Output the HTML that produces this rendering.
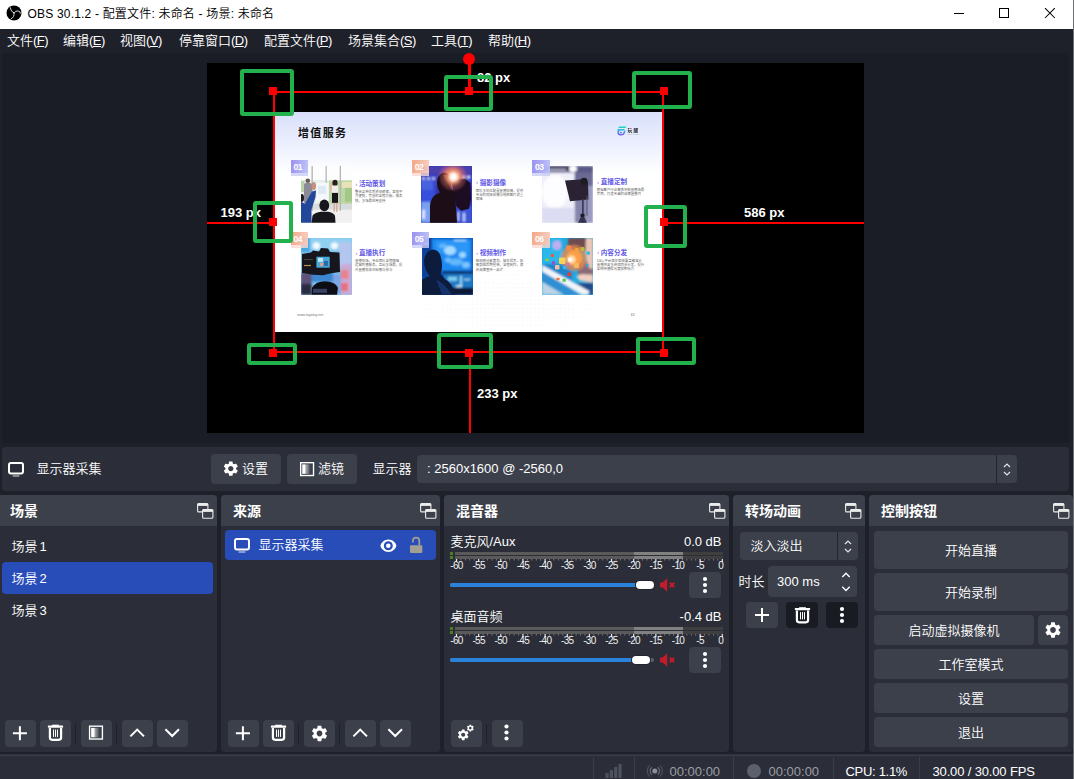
<!DOCTYPE html>
<html lang="zh-CN">
<head>
<meta charset="utf-8">
<title>OBS 30.1.2 - 配置文件: 未命名 - 场景: 未命名</title>
<style>
*{box-sizing:border-box;margin:0;padding:0}
html,body{width:1074px;height:779px;overflow:hidden;background:#1f212a}
body{position:relative;font-family:"Liberation Sans","Noto Sans CJK SC",sans-serif;font-size:13px;color:#fff;line-height:1;font-weight:350}
.abs{position:absolute}
.t{position:absolute;white-space:nowrap;line-height:16px;height:16px}
.mk{letter-spacing:-.55px}
u{text-decoration:underline;text-underline-offset:1px}
/* title bar */
#titlebar{left:0;top:0;width:1073px;height:29px;background:#fff;color:#000}
#edge{left:1073px;top:0;width:1px;height:779px;background:#6d6f75}
#titletext{left:27.500px;top:6px;font-size:12px;color:#000;letter-spacing:.19px}
/* menu */
#menubar{left:0;top:29px;width:1073px;height:24px;background:#1f212a}
#menubar .t{top:4px;font-size:13px}
/* preview */
#pvbg{left:2px;top:53px;width:1067px;height:390px;background:#1a1c26}
#pv{left:207px;top:63px;width:657px;height:370px;background:#000;overflow:hidden}
.red{position:absolute;background:#ff0000}
.gr{position:absolute;border:4px solid #22b14c;border-radius:3px}
.lbl{position:absolute;font-weight:bold;font-size:13px;color:#fff;white-space:nowrap;line-height:14px;text-shadow:1px 1px 1px #000}
/* toolbar */
#tb{left:2px;top:447px;width:1067px;height:44px;background:#2b2e38;border-radius:4px}
.btn{position:absolute;background:#3c404b;border-radius:4px}
/* docks */
.dock{position:absolute;top:495px;height:257px;background:#2b2e38;border-radius:4px}
.dock .hd{position:absolute;left:0;top:0;right:0;height:31px;background:#3c404b;border-radius:4px 4px 0 0}
.dock .hd .t{left:12px;top:7px;font-size:14px;font-weight:bold;line-height:18px;height:18px}
.sel{position:absolute;background:#284cb8;border-radius:4px}
.tk{position:absolute;font-size:10px;line-height:10px;height:10px;letter-spacing:-.7px;white-space:nowrap;color:#f0f0f0}
/* status */
#sbline{left:0;top:754px;width:1073px;height:1px;background:#2f323d}
.sep{position:absolute;top:757px;width:1px;height:22px;background:#2b2e38}
</style>
</head>
<body>
<!-- TITLE BAR -->
<div id="titlebar" class="abs">
  <svg class="abs" style="left:6px;top:5px" width="16" height="16" viewBox="0 0 16 16">
    <circle cx="8" cy="7.900" r="7.500" fill="#000"/>
    <path d="M8 8Q4.600 6.800 4.200 2.700M8 8Q9.600 5.400 12.200 6T14.400 8.200M8 8Q8.600 12 5.200 13.800" stroke="#fff" stroke-width=".9" fill="none" stroke-linecap="round" opacity=".92"/>
  </svg>
  <div id="titletext" class="t">OBS 30.1.2 - 配置文件: 未命名 - 场景: 未命名</div>
  <svg class="abs" style="left:950px;top:0" width="123" height="29" viewBox="0 0 123 29">
    <path d="M4 13.500h10" stroke="#000" stroke-width="1" fill="none"/>
    <rect x="49.500" y="8.500" width="9" height="9" stroke="#000" stroke-width="1" fill="none"/>
    <path d="M95 8.200l9.800 9.800M104.800 8.200l-9.800 9.800" stroke="#000" stroke-width="1.050" fill="none"/>
  </svg>
</div>
<div id="edge" class="abs"></div>

<!-- MENU BAR -->
<div id="menubar" class="abs">
  <div class="t" style="left:7px">文件<span class="mk">(<u>F</u>)</span></div>
  <div class="t" style="left:63px">编辑<span class="mk">(<u>E</u>)</span></div>
  <div class="t" style="left:120px">视图<span class="mk">(<u>V</u>)</span></div>
  <div class="t" style="left:179px">停靠窗口<span class="mk">(<u>D</u>)</span></div>
  <div class="t" style="left:264px">配置文件<span class="mk">(<u>P</u>)</span></div>
  <div class="t" style="left:348px">场景集合<span class="mk">(<u>S</u>)</span></div>
  <div class="t" style="left:431px">工具<span class="mk">(<u>T</u>)</span></div>
  <div class="t" style="left:488px">帮助<span class="mk">(<u>H</u>)</span></div>
</div>

<!-- PREVIEW -->
<div id="pvbg" class="abs"></div>
<div id="pv" class="abs">
<!--SLIDE-->
<div id="slide" style="position:absolute;left:68px;top:49px;width:387px;height:220px;background:linear-gradient(180deg,#d9dffa 0px,#e3e8fc 18px,#f1f4fe 40px,#ffffff 62px);overflow:hidden;color:#000">
<div style="position:absolute;left:120px;top:140px;width:250px;height:76px;opacity:.4;background-image:radial-gradient(circle,#e4e4ee 0.55px,transparent 0.9px);background-size:4.200px 4.200px;-webkit-mask-image:radial-gradient(ellipse at 45% 70%,#000 20%,transparent 70%);mask-image:radial-gradient(ellipse at 45% 70%,#000 20%,transparent 70%)"></div>
<div style="position:absolute;left:23px;top:14.700px;font-size:11px;font-weight:bold;line-height:13px;letter-spacing:1.350px;color:#111;white-space:nowrap">增值服务</div>
<svg style="position:absolute;left:341.500px;top:13.500px" width="24" height="10" viewBox="0 0 24 10"><defs><linearGradient id="lg" x1="0" y1="0" x2="0" y2="1"><stop offset="0" stop-color="#22cfc8"/><stop offset=".45" stop-color="#3d8ff0"/><stop offset="1" stop-color="#8a5cf2"/></linearGradient></defs><g filter="url(#b0)"><path d="M2.300 .4h7.300l-1.200 1.700h-7.200z" fill="#1fd2c6"/><path d="M.6 3h7.200l-1 1.600h-3.400q-1.300 0-1.300 1.300v.6q0 1.500 1.700 1.500h.8q1.500 0 1.900-1.500l.5-1.900h1.600l-.8 2.600q-.7 2.300-3.200 2.300h-1.200q-3 0-3-3z" fill="url(#lg)"/><path d="M3.300 5.500l2.200 1.100-2.200 1.100z" fill="#6a6af2"/><text x="10.600" y="6.100" font-size="4.700" letter-spacing="1.200" font-weight="bold" fill="#2a2a33" font-family="Liberation Sans, Noto Sans CJK SC, sans-serif">玩醒</text><text x="10.600" y="9.200" font-size="1.700" fill="#888" font-family="Liberation Sans, sans-serif" letter-spacing=".55">TOYXING</text></g></svg>
<svg width="0" height="0" style="position:absolute"><defs><filter id="b0" x="-5%" y="-5%" width="110%" height="110%"><feGaussianBlur stdDeviation="0.25"/></filter><filter id="b1" x="-10%" y="-10%" width="120%" height="120%"><feGaussianBlur stdDeviation="0.6"/></filter><filter id="b2" x="-10%" y="-10%" width="120%" height="120%"><feGaussianBlur stdDeviation="0.9"/></filter></defs></svg>
<svg style="position:absolute;left:26px;top:54.4px" width="51" height="56.800" viewBox="0 0 51 57" preserveAspectRatio="none"><rect width="51" height="57" fill="#fdfdfd"/><g filter="url(#b1)"><rect x="0" y="14" width="51" height="25" fill="#e9efe9"/><rect x="28" y="14.500" width="23" height="24" fill="#bcd6a6"/><rect x="41" y="16" width="10" height="6" fill="#e9e2b8"/><rect x="44" y="22" width="7" height="14" fill="#a4c88a"/><rect x="0" y="15" width="3.500" height="11" fill="#b9d3a8"/><rect x="0" y="38" width="51" height="6" fill="#d9dcdc"/><rect x="0" y="44" width="51" height="13" fill="#f1f1f1"/><rect x="10.500" y="0" width="1.300" height="45" fill="#b0b2b4"/><rect x="24.500" y="0" width="1.300" height="45" fill="#b6b8ba"/><rect x="38.700" y="0" width="1.300" height="45" fill="#b2b4b6"/><rect x="15.400" y="17" width="12.200" height="18" fill="#f4f7fb"/><rect x="17" y="20" width="8" height="8" fill="#dfe9f6"/><rect x="3" y="17" width="8" height="21" rx="2" fill="#8b8b97"/><circle cx="6.800" cy="14.800" r="2.300" fill="#6b5a52"/><rect x="4.500" y="37" width="5" height="8" fill="#77778a"/><ellipse cx="34" cy="17" rx="2.600" ry="3.200" fill="#2a1d1a"/><rect x="30.600" y="19.500" width="6.600" height="8" rx="1.500" fill="#f2ece8"/><rect x="29" y="17.500" width="2" height="7" fill="#e2b9a2"/><rect x="31" y="27" width="6" height="10" fill="#14141a"/><rect x="32.500" y="37" width="1.500" height="9" fill="#d9ae98"/><rect x="35" y="37" width="1.500" height="9" fill="#d9ae98"/><ellipse cx="12.800" cy="20" rx="2.200" ry="4" fill="#c98f78"/><path d="M0 36 L4 38 L11 25.500 L15 24.500 L14.500 31 L10.500 44 L10.500 57 L0 57z" fill="#24479a"/><ellipse cx="1" cy="32" rx="2" ry="4" fill="#1b1b22"/><ellipse cx="23.300" cy="39.500" rx="4.900" ry="6" fill="#15161c"/><path d="M10.500 57 L11.500 50 Q14 46.500 20 46 L27 46 Q32 46.500 34 50 L34.500 57z" fill="#16171d"/></g></svg>
<div style="position:absolute;left:15.8px;top:59px;width:17.400px;height:5.400px;background:#c9cdf5;opacity:.8"></div>
<div style="position:absolute;left:15.8px;top:48px;width:17.400px;height:13.300px;background:linear-gradient(100deg,#968af0,#bcc4f7);opacity:.95"></div>
<div style="position:absolute;left:18.5px;top:49.9px;font-size:8.600px;letter-spacing:-.5px;font-weight:bold;color:#fff;line-height:10px;white-space:nowrap">01</div>
<div style="position:absolute;left:80.4px;top:67.1px;font-size:6.600px;font-weight:bold;color:#6258e6;line-height:9px;white-space:nowrap"><span style="font-size:5px;color:#8a84ea;position:relative;top:-0.500px">›</span> 活动策划</div>
<div style="position:absolute;left:80.0px;top:78.0px;font-size:3.400px;color:#555;line-height:4.350px;white-space:nowrap">整合各种优质资源确保，高效平</div>
<div style="position:absolute;left:80.0px;top:82.3px;font-size:3.400px;color:#555;line-height:4.350px;white-space:nowrap">方便快，完善的全程功能，服务</div>
<div style="position:absolute;left:80.0px;top:86.6px;font-size:3.400px;color:#555;line-height:4.350px;white-space:nowrap">快，多场景应用支持</div>
<svg style="position:absolute;left:146.3px;top:54.4px" width="51" height="56.800" viewBox="0 0 51 57" preserveAspectRatio="none"><rect width="51" height="57" fill="#3535ad"/><g filter="url(#b2)"><rect x="0" y="9" width="51" height="12" fill="#3a45c8"/><rect x="0" y="21" width="14" height="36" fill="#3550dc"/><rect x="0" y="14" width="12" height="10" fill="#4a62e0"/><rect x="0" y="36" width="10" height="21" fill="#7aa0f2"/><rect x="36" y="40" width="15" height="17" fill="#3a56d6"/><rect x="0" y="0" width="51" height="8" fill="#4a3fae"/><circle cx="31.500" cy="11" r="14" fill="#8a4a9a" opacity=".55"/><circle cx="31.500" cy="11" r="9.500" fill="#d9776a" opacity=".8"/><circle cx="31.500" cy="11" r="5.500" fill="#f6b08a"/><circle cx="31.500" cy="11" r="2.800" fill="#fff8f0"/><circle cx="2.500" cy="12.500" r="1.300" fill="#eaf0ff"/><circle cx="7.500" cy="12.500" r="1.300" fill="#eaf0ff"/><circle cx="12.500" cy="12.500" r="1.300" fill="#eaf0ff"/><circle cx="42.500" cy="11" r="1.500" fill="#f2f4ff"/><circle cx="47.500" cy="11" r="1.500" fill="#f2f4ff"/><rect x="1" y="44" width="3" height="9" fill="#dfe8ff"/><rect x="36" y="46" width="2" height="9" fill="#c9d8ff"/><rect x="42" y="47" width="2" height="9" fill="#c9d8ff"/></g><g filter="url(#b1)"><path d="M9 57 L9 40 Q9.500 31 16 28 L19 26.500 Q14.500 20 16.500 12.500 Q19.500 5.500 25.500 7 Q30 9 30 16 L29.500 22 Q33 24 34 28 L36 57z" fill="#1b0f16"/><path d="M22 9 Q28 7 29.800 14 L29.500 22 Q27 16 22 9z" fill="#7a3a2a" opacity=".8"/><path d="M31 17 L36 13.500 L44 13 L49.500 17 L50 33 L48 43 L40 45 L35 40 L33 28z" fill="#1a1024"/><rect x="28" y="24" width="7" height="3" fill="#1b0f16"/></g><g filter="url(#b2)"><circle cx="32" cy="11.500" r="13" fill="#d8706a" opacity=".35"/><circle cx="32" cy="11" r="9" fill="#f08a6a" opacity=".55"/><circle cx="32.500" cy="11" r="6" fill="#ffc8a4" opacity=".85"/><circle cx="32.500" cy="11" r="3.600" fill="#ffffff"/></g></svg>
<div style="position:absolute;left:137px;top:59px;width:17.400px;height:5.400px;background:#f9d9d2;opacity:.8"></div>
<div style="position:absolute;left:137px;top:48px;width:17.400px;height:13.300px;background:linear-gradient(100deg,#f2a27e,#f8cfc4);opacity:.95"></div>
<div style="position:absolute;left:139.7px;top:49.9px;font-size:8.600px;letter-spacing:-.5px;font-weight:bold;color:#fff;line-height:10px;white-space:nowrap">02</div>
<div style="position:absolute;left:201.2px;top:65.8px;font-size:6.600px;font-weight:bold;color:#6258e6;line-height:9px;white-space:nowrap"><span style="font-size:5px;color:#8a84ea;position:relative;top:-0.500px">›</span> 摄影摄像</div>
<div style="position:absolute;left:200.79999999999998px;top:76.7px;font-size:3.400px;color:#555;line-height:4.350px;white-space:nowrap">团队多机位配置直播拍摄，提供</div>
<div style="position:absolute;left:200.79999999999998px;top:81.0px;font-size:3.400px;color:#555;line-height:4.350px;white-space:nowrap">专业的现场拍摄与视频图片双重</div>
<div style="position:absolute;left:200.79999999999998px;top:85.3px;font-size:3.400px;color:#555;line-height:4.350px;white-space:nowrap">保障</div>
<svg style="position:absolute;left:267.4px;top:54.4px" width="51" height="56.800" viewBox="0 0 51 57" preserveAspectRatio="none"><rect width="51" height="57" fill="#ededf9"/><g filter="url(#b2)"><rect x="32.500" y="0" width="18.500" height="57" fill="#8484ac"/><rect x="32.500" y="0" width="18.500" height="22" fill="#6a6a94"/><rect x="44" y="20" width="7" height="37" fill="#9a9ac0"/><rect x="0" y="6" width="32.500" height="51" fill="#efeffa"/><ellipse cx="13" cy="26" rx="13" ry="17" fill="#fdfdff"/><rect x="0" y="42" width="32" height="15" fill="#dcdcf2"/><rect x="0" y="0" width="51" height="6.500" fill="#5a5a86"/><rect x="3" y="1" width="24" height="3" fill="#1e1e34"/><rect x="6" y="3" width="18" height="1.500" fill="#c9c9e2"/><ellipse cx="31" cy="3" rx="4" ry="3" fill="#ffffff"/></g><g filter="url(#b1)"><path d="M23 14.500 L38.500 13.500 L46 16 L46.500 33.500 L28 35.500z" fill="#2a2330"/><circle cx="42" cy="15.500" r="3.600" fill="#1e1a24"/><rect x="40" y="33" width="1.700" height="24" fill="#3a3a54"/><rect x="44.500" y="30" width="1" height="20" fill="#55557a"/><path d="M36 57 L40.500 48 L45 57z" fill="#33334a"/><rect x="38.500" y="48" width="4" height="3" fill="#1e1a24"/></g></svg>
<div style="position:absolute;left:257.3px;top:59px;width:17.400px;height:5.400px;background:#c9cdf5;opacity:.8"></div>
<div style="position:absolute;left:257.3px;top:48px;width:17.400px;height:13.300px;background:linear-gradient(100deg,#968af0,#bcc4f7);opacity:.95"></div>
<div style="position:absolute;left:260.0px;top:49.9px;font-size:8.600px;letter-spacing:-.5px;font-weight:bold;color:#fff;line-height:10px;white-space:nowrap">03</div>
<div style="position:absolute;left:322.2px;top:65.0px;font-size:6.600px;font-weight:bold;color:#6258e6;line-height:9px;white-space:nowrap"><span style="font-size:5px;color:#8a84ea;position:relative;top:-0.500px">›</span> 直播定制</div>
<div style="position:absolute;left:321.8px;top:75.9px;font-size:3.400px;color:#555;line-height:4.350px;white-space:nowrap">根据客户行业需求定制直播场景</div>
<div style="position:absolute;left:321.8px;top:80.2px;font-size:3.400px;color:#555;line-height:4.350px;white-space:nowrap">页面，打造专属的品牌直播间</div>
<svg style="position:absolute;left:26px;top:126.2px" width="51" height="56.800" viewBox="0 0 51 57" preserveAspectRatio="none"><rect width="51" height="57" fill="#7fc5ec"/><g filter="url(#b2)"><rect x="0" y="0" width="51" height="12" fill="#8fd0f0"/><rect x="0" y="0" width="9" height="14" fill="#4aa6e0"/><rect x="38" y="4" width="13" height="26" fill="#b4c6ee"/><rect x="40" y="26" width="11" height="31" fill="#c9aad6"/><rect x="39.500" y="32" width="8" height="9" fill="#e8828c"/><rect x="40" y="45" width="7" height="8" fill="#ea6e7c"/><rect x="30" y="36" width="10" height="21" fill="#7aa6e4"/><rect x="10" y="34" width="22" height="10" fill="#3d86d0"/><circle cx="15.400" cy="7.900" r="3.600" fill="#f4fbff"/><circle cx="33.500" cy="7.900" r="3.600" fill="#f0f9ff"/><rect x="0" y="35" width="10.500" height="22" fill="#5e5178"/><rect x="0" y="46" width="10.500" height="11" fill="#2c2a40"/></g><g filter="url(#b1)"><path d="M1 16 L10 14.500 L12 12.500 L18 13.500 L20 10 L27 10.500 L29 14 L38.500 14.500 L39 34 L30 35.500 L22 37.500 L12 37 L1 35z" fill="#12151d"/><rect x="15.400" y="18.800" width="13.300" height="11" fill="#4aa9d9"/><rect x="17" y="20" width="5" height="4" fill="#bfe6f6"/><rect x="23" y="23" width="4" height="5" fill="#2a6aa8"/><rect x="19" y="25" width="3" height="3" fill="#e8a090"/><rect x="3" y="21" width="9" height="1.200" fill="#4a4038"/><rect x="3" y="27" width="7" height="1.200" fill="#c08a4a"/><path d="M10.500 57 L11 50 Q15 43.500 24 43.500 Q34 44 37 50 L36 57z" fill="#0f1017"/><rect x="12" y="51" width="14" height="4" fill="#4a5a86" opacity=".7"/></g></svg>
<div style="position:absolute;left:15.8px;top:130.8px;width:17.400px;height:5.400px;background:#f9d9d2;opacity:.8"></div>
<div style="position:absolute;left:15.8px;top:119.8px;width:17.400px;height:13.300px;background:linear-gradient(100deg,#f2a27e,#f8cfc4);opacity:.95"></div>
<div style="position:absolute;left:18.5px;top:121.7px;font-size:8.600px;letter-spacing:-.5px;font-weight:bold;color:#fff;line-height:10px;white-space:nowrap">04</div>
<div style="position:absolute;left:80.4px;top:136.0px;font-size:6.600px;font-weight:bold;color:#6258e6;line-height:9px;white-space:nowrap"><span style="font-size:5px;color:#8a84ea;position:relative;top:-0.500px">›</span> 直播执行</div>
<div style="position:absolute;left:80.0px;top:146.9px;font-size:3.400px;color:#555;line-height:4.350px;white-space:nowrap">直播现场，专业团队全程保障</div>
<div style="position:absolute;left:80.0px;top:151.20000000000002px;font-size:3.400px;color:#555;line-height:4.350px;white-space:nowrap">运营助播服务，互动多场景，提</div>
<div style="position:absolute;left:80.0px;top:155.5px;font-size:3.400px;color:#555;line-height:4.350px;white-space:nowrap">升直播效果体验感与参与</div>
<svg style="position:absolute;left:147px;top:126.2px" width="51" height="56.800" viewBox="0 0 51 57" preserveAspectRatio="none"><rect width="51" height="57" fill="#0d58c0"/><g filter="url(#b2)"><rect x="0" y="0" width="10" height="40" fill="#0b3f96"/><rect x="10" y="1" width="39.500" height="32" fill="#1f8af2"/><rect x="14" y="3" width="33" height="12" fill="#2a96f6"/><ellipse cx="28" cy="12.500" rx="6" ry="4.500" fill="#a6dcff"/><ellipse cx="21" cy="8" rx="4" ry="2.500" fill="#5fb6ff"/><ellipse cx="40.500" cy="17" rx="3.500" ry="3" fill="#9adaff"/><ellipse cx="34" cy="24" rx="7" ry="3.500" fill="#62b8fa"/><ellipse cx="44" cy="27" rx="4" ry="3" fill="#7cc6ff"/><ellipse cx="26" cy="22" rx="3" ry="2.500" fill="#6cc0ff"/><rect x="32" y="1.500" width="12" height="1.500" fill="#bfe6ff"/><rect x="21" y="33" width="30" height="3" fill="#0a2a66"/><rect x="22" y="36" width="29" height="14" fill="#1d78c4"/><rect x="26" y="39" width="9" height="4" fill="#7fd0f0"/><rect x="38" y="38" width="2" height="10" fill="#8fd8f6"/><rect x="42" y="41" width="6" height="1.500" fill="#a6e0fa"/><rect x="34" y="47.500" width="6" height="1.800" fill="#d6f0ff"/><rect x="0" y="50" width="51" height="7" fill="#071430"/></g><g filter="url(#b1)"><path d="M0 57 L0 42 Q4 39 8 38.500 Q2.500 32 2 23 Q3.500 12.500 11 11.500 Q18.500 12.500 19.500 22 Q21 30 18.500 36 Q21 38.500 23 41.500 Q30 44.500 33.500 57z" fill="#0a1a3e"/><path d="M14 42 Q22 44 30 57 L20 57z" fill="#12306a"/></g></svg>
<div style="position:absolute;left:137px;top:130.8px;width:17.400px;height:5.400px;background:#c9cdf5;opacity:.8"></div>
<div style="position:absolute;left:137px;top:119.8px;width:17.400px;height:13.300px;background:linear-gradient(100deg,#968af0,#bcc4f7);opacity:.95"></div>
<div style="position:absolute;left:139.7px;top:121.7px;font-size:8.600px;letter-spacing:-.5px;font-weight:bold;color:#fff;line-height:10px;white-space:nowrap">05</div>
<div style="position:absolute;left:201.2px;top:136.0px;font-size:6.600px;font-weight:bold;color:#6258e6;line-height:9px;white-space:nowrap"><span style="font-size:5px;color:#8a84ea;position:relative;top:-0.500px">›</span> 视频制作</div>
<div style="position:absolute;left:200.79999999999998px;top:146.9px;font-size:3.400px;color:#555;line-height:4.350px;white-space:nowrap">短视频创意策划，脚本撰写，拍</div>
<div style="position:absolute;left:200.79999999999998px;top:151.20000000000002px;font-size:3.400px;color:#555;line-height:4.350px;white-space:nowrap">摄剪辑后期包装，全程制作，满</div>
<div style="position:absolute;left:200.79999999999998px;top:155.5px;font-size:3.400px;color:#555;line-height:4.350px;white-space:nowrap">足品牌宣传一站式</div>
<svg style="position:absolute;left:267.2px;top:126.2px" width="51" height="56.800" viewBox="0 0 51 57" preserveAspectRatio="none"><rect width="51" height="57" fill="#26a8de"/><g filter="url(#b2)"><rect x="0" y="0" width="20" height="30" fill="#2bb8ea"/><rect x="0" y="26" width="30" height="31" fill="#1d86cc"/><rect x="26" y="0" width="25" height="12" fill="#6d4c50"/><rect x="36" y="24" width="15" height="14" fill="#8a6a78"/><circle cx="32" cy="20" r="13" fill="#e98a4a" opacity=".75"/><circle cx="32" cy="20" r="8" fill="#ff9f45"/><circle cx="29.500" cy="21.500" r="4" fill="#ffe2b0"/><circle cx="15" cy="7.300" r="4.600" fill="#c3acf2"/><path d="M44 0 L51 0 L51 31 L47 30 Q42.500 18 44 0z" fill="#ebc6b6"/><path d="M34.500 39 Q36 36 42 36.500 L51 37 L51 45 L38 43z" fill="#f0d0c4"/><path d="M30 46 L51 45 L51 57 L44 57z" fill="#204c8c"/><path d="M0 27 L47.500 53.500 L46 57 L40 57 L0 33.500z" fill="#f2f5f8"/><path d="M0 34 L39 57 L0 57z" fill="#2f8fd2"/><path d="M0 44 L22 57 L0 57z" fill="#bcd4e6"/></g><g filter="url(#b1)"><rect x="24" y="7.500" width="5.400" height="5.400" rx="1" fill="#f2894a"/><rect x="33" y="10" width="3.600" height="3.600" rx=".7" fill="#f6a03c"/><rect x="38.500" y="9" width="4" height="4" rx=".8" fill="#b8b83a"/><rect x="44.500" y="13.500" width="3.400" height="3.400" rx=".7" fill="#2ec0e6"/><rect x="9" y="16" width="3" height="3" rx=".6" fill="#f0563c"/><rect x="3.500" y="20.500" width="3.300" height="2.600" rx=".6" fill="#8ed03c"/><rect x="10" y="23" width="3" height="3.600" rx=".6" fill="#a44cc8"/><rect x="17" y="19.500" width="6.500" height="6.500" rx="1" fill="#f6d25a"/><rect x="26.300" y="20" width="3.600" height="3.600" rx=".6" fill="#ffffff"/><rect x="24.500" y="24.800" width="3" height="3" rx=".6" fill="#e070c0"/><rect x="21" y="28" width="3.300" height="3.300" rx=".6" fill="#36b6f0"/><rect x="13" y="27" width="4.500" height="4.500" rx=".8" fill="#f4c0a0"/><rect x="32" y="25" width="5" height="5" rx=".8" fill="#f8b860"/><rect x="25.500" y="34.500" width="3.600" height="3.600" rx=".6" fill="#ee3a2e"/><rect x="14.500" y="40" width="3" height="2.300" rx=".5" fill="#f6703c"/><rect x="20.500" y="41" width="3.300" height="3" rx=".6" fill="#5cc850"/><rect x="44" y="26" width="2.600" height="2.600" rx=".6" fill="#2ab0dc"/></g></svg>
<div style="position:absolute;left:257.3px;top:130.8px;width:17.400px;height:5.400px;background:#f9d9d2;opacity:.8"></div>
<div style="position:absolute;left:257.3px;top:119.8px;width:17.400px;height:13.300px;background:linear-gradient(100deg,#f2a27e,#f8cfc4);opacity:.95"></div>
<div style="position:absolute;left:260.0px;top:121.7px;font-size:8.600px;letter-spacing:-.5px;font-weight:bold;color:#fff;line-height:10px;white-space:nowrap">06</div>
<div style="position:absolute;left:322.2px;top:135.6px;font-size:6.600px;font-weight:bold;color:#6258e6;line-height:9px;white-space:nowrap"><span style="font-size:5px;color:#8a84ea;position:relative;top:-0.500px">›</span> 内容分发</div>
<div style="position:absolute;left:321.8px;top:146.5px;font-size:3.400px;color:#555;line-height:4.350px;white-space:nowrap">100+平台媒体矩阵覆盖精准分</div>
<div style="position:absolute;left:321.8px;top:150.8px;font-size:3.400px;color:#555;line-height:4.350px;white-space:nowrap">直播内容多终端同步分发，提升</div>
<div style="position:absolute;left:321.8px;top:155.1px;font-size:3.400px;color:#555;line-height:4.350px;white-space:nowrap">全网传播曝光度和影响力</div>
<div style="position:absolute;left:22.300px;top:200.800px;font-size:3.600px;color:#777;line-height:5px;white-space:nowrap">www.toyxing.net</div>
<div style="position:absolute;left:355.500px;top:200.600px;font-size:3.800px;color:#666;line-height:5px;white-space:nowrap">15</div>
</div>
<!--/SLIDE-->
</div>
<!--OVERLAY-->
<div class="red" style="left:273px;top:91px;width:391px;height:2px"></div>
<div class="red" style="left:273px;top:351px;width:391px;height:2px"></div>
<div class="red" style="left:273px;top:91px;width:2px;height:262px"></div>
<div class="red" style="left:662px;top:91px;width:2px;height:262px"></div>
<div class="red" style="left:207px;top:222px;width:66px;height:2px"></div>
<div class="red" style="left:664px;top:222px;width:200px;height:2px"></div>
<div class="red" style="left:468px;top:59px;width:3px;height:32px"></div>
<div class="red" style="left:469px;top:353px;width:2px;height:80px"></div>
<div class="red" style="left:269px;top:87px;width:8px;height:8px"></div>
<div class="red" style="left:465px;top:87px;width:8px;height:8px"></div>
<div class="red" style="left:660px;top:87px;width:8px;height:8px"></div>
<div class="red" style="left:269px;top:218px;width:8px;height:8px"></div>
<div class="red" style="left:660px;top:218px;width:8px;height:8px"></div>
<div class="red" style="left:269px;top:349px;width:8px;height:8px"></div>
<div class="red" style="left:465px;top:349px;width:8px;height:8px"></div>
<div class="red" style="left:660px;top:349px;width:8px;height:8px"></div>
<div class="red" style="left:463px;top:53px;width:12px;height:12px;border-radius:50%"></div>
<div class="lbl" style="left:477px;top:71px">82 px</div>
<div class="lbl" style="left:220.5px;top:206px">193 px</div>
<div class="lbl" style="left:744px;top:206px">586 px</div>
<div class="lbl" style="left:477px;top:387px">233 px</div>
<div class="gr" style="left:240px;top:69px;width:54px;height:47px"></div>
<div class="gr" style="left:444px;top:75px;width:49px;height:36px"></div>
<div class="gr" style="left:632px;top:71px;width:60px;height:38px"></div>
<div class="gr" style="left:253px;top:201px;width:40px;height:42px"></div>
<div class="gr" style="left:644px;top:205px;width:43px;height:43px"></div>
<div class="gr" style="left:247px;top:343px;width:50px;height:22px"></div>
<div class="gr" style="left:437px;top:333px;width:56px;height:36px"></div>
<div class="gr" style="left:636px;top:337px;width:60px;height:28px"></div>
<!--/OVERLAY-->

<!-- SOURCE TOOLBAR -->
<div id="tb" class="abs">
<!--TOOLBAR-->
<svg class="abs" style="left:6px;top:15px" width="16" height="15" viewBox="0 0 16 15"><rect x="1" y="1" width="14" height="10.500" rx="2" fill="none" stroke="#fff" stroke-width="2"/><rect x="4.500" y="13.500" width="7" height="1" rx=".5" fill="#fff" opacity=".85"/></svg>
<div class="t" style="left:34.5px;top:14px;">显示器采集</div>
<div class="btn" style="left:209px;top:7px;width:70px;height:30px;"></div>
<svg class="abs" style="left:221px;top:14px" width="16" height="15" viewBox="0 0 16 15"><g transform="translate(0.400,0.200) scale(0.74000,0.74000) translate(-2.000,-2.000)"><path d="M19.140 12.940c.04-.3.060-.61.060-.940s-.02-.64-.07-.940l2.030-1.580a.49.490 0 0 0 .12-.61l-1.920-3.320a.488.488 0 0 0-.59-.22l-2.390.960c-.5-.38-1.030-.7-1.620-.940l-.36-2.540a.484.484 0 0 0-.48-.41h-3.840c-.24 0-.43.170-.47.410l-.36 2.540c-.59.240-1.130.57-1.620.940l-2.390-.960c-.22-.08-.47 0-.59.220L2.740 8.870c-.12.210-.08.470.12.610l2.030 1.580c-.05.300-.09.630-.09.940s.02.640.07.940l-2.030 1.580a.49.490 0 0 0-.12.610l1.920 3.320c.12.220.37.290.59.220l2.390-.960c.5.380 1.030.7 1.620.940l.36 2.540c.05.240.24.410.48.410h3.840c.24 0 .44-.17.470-.41l.36-2.540c.59-.24 1.130-.56 1.620-.940l2.390.960c.22.080.47 0 .59-.22l1.920-3.320c.12-.22.070-.47-.12-.61l-2.010-1.580zM12 15.600c-1.980 0-3.600-1.620-3.600-3.600s1.620-3.600 3.600-3.600 3.600 1.620 3.600 3.600-1.620 3.600-3.600 3.600z" fill="#fff"/></g></svg>
<div class="t" style="left:240px;top:14px;">设置</div>
<div class="btn" style="left:285px;top:7px;width:70px;height:30px;"></div>
<svg class="abs" style="left:298px;top:15px" width="15" height="15" viewBox="0 0 15 15"><g transform="translate(0.000,0.000) scale(0.97931,0.97931) translate(-0.000,-0.000)"><rect x=".7" y=".7" width="13.100" height="13.100" fill="none" stroke="#fff" stroke-width="1.400"/><rect x="2.300" y="2.400" width="2.900" height="9.700" fill="#fff"/><rect x="5.200" y="2.400" width="1.300" height="9.700" fill="#fff" opacity=".75"/><rect x="6.500" y="2.400" width="1.300" height="9.700" fill="#fff" opacity=".5"/><rect x="7.800" y="2.400" width="1.300" height="9.700" fill="#fff" opacity=".3"/><rect x="9.100" y="2.400" width="1.300" height="9.700" fill="#fff" opacity=".12"/></g></svg>
<div class="t" style="left:316px;top:14px;">滤镜</div>
<div class="t" style="left:370.5px;top:14px;">显示器</div>
<div class="btn" style="left:415px;top:8px;width:600px;height:28px;"></div>
<div class="abs" style="left:994px;top:8px;width:1px;height:28px;background:#23252e"></div>
<div class="t" style="left:425px;top:14px;">: 2560x1600 @ -2560,0</div>
<svg class="abs" style="left:1001px;top:16px" width="8" height="5" viewBox="0 0 8 5"><g transform="translate(0.500,0.500) scale(1.00000,1.00000) translate(-0.000,-0.000)"><path d="M.5 3.5L3.5 .5L6.5 3.5" stroke="#e4e4e8" stroke-width="1.2" fill="none"/></g></svg>
<svg class="abs" style="left:1001px;top:24px" width="8" height="5" viewBox="0 0 8 5"><g transform="translate(0.500,0.500) scale(1.00000,1.00000) translate(-0.000,-0.000)"><path d="M.5 .5L3.5 3.5L6.5 .5" stroke="#e4e4e8" stroke-width="1.2" fill="none"/></g></svg>
<!--/TOOLBAR-->
</div>

<!-- DOCKS -->
<div class="dock" id="d1" style="left:-2px;width:219px"><div class="hd"><div class="t">场景</div></div>
<!--D1-->
<svg class="abs" style="left:199px;top:8px" width="17" height="16" viewBox="0 0 17 16"><rect x=".6" y=".6" width="10.300" height="8.300" rx="1" fill="#3c404b" stroke="#ececec" stroke-width="1.100"/><rect x=".6" y=".6" width="10.300" height="2.300" fill="#ececec"/><rect x="5.600" y="6.600" width="10.300" height="8.600" rx="1" fill="#3c404b" stroke="#ececec" stroke-width="1.100"/><rect x="5.600" y="6.600" width="10.300" height="2.300" fill="#ececec"/></svg>
<div class="t" style="left:13.5px;top:44px;word-spacing:-1.500px">场景 1</div>
<div class="sel" style="left:4px;top:67px;width:211px;height:32px"></div>
<div class="t" style="left:13.5px;top:76px;word-spacing:-1.500px">场景 2</div>
<div class="t" style="left:13.5px;top:108px;word-spacing:-1.500px">场景 3</div>
<div class="btn" style="left:7px;top:225px;width:31px;height:27px;"></div>
<svg class="abs" style="left:14px;top:231px" width="15" height="15" viewBox="0 0 15 15"><g transform="translate(0.900,0.200) scale(1.00000,1.00000) translate(-0.000,-0.000)"><path d="M7 0v14M0 7h14" stroke="#fff" stroke-width="2" fill="none"/></g></svg>
<div class="btn" style="left:42px;top:225px;width:31px;height:27px;"></div>
<svg class="abs" style="left:49px;top:228px" width="17" height="18" viewBox="0 0 17 18"><g transform="translate(0.500,0.800) scale(1.00000,1.00000) translate(-0.000,-0.000)"><path d="M4.600 .9h6.800v1.300h-6.800z" fill="#fff"/><rect x=".4" y="1.700" width="15.200" height="2.200" rx=".6" fill="#fff"/><path d="M2.400 4.300v9.500q0 2.200 2.200 2.200h6.800q2.200 0 2.200-2.200v-9.500" fill="none" stroke="#fff" stroke-width="2.200"/><path d="M6 5.800v7.300M8 5.800v7.300M10 5.800v7.300" stroke="#fff" stroke-width="1"/></g></svg>
<div class="abs" style="left:77px;top:229px;width:1px;height:20px;background:#1f212a"></div>
<div class="btn" style="left:83px;top:225px;width:31px;height:27px;"></div>
<svg class="abs" style="left:90px;top:230px" width="16" height="15" viewBox="0 0 16 15"><g transform="translate(0.900,0.500) scale(0.97931,0.97931) translate(-0.000,-0.000)"><rect x=".7" y=".7" width="13.100" height="13.100" fill="none" stroke="#fff" stroke-width="1.400"/><rect x="2.300" y="2.400" width="2.900" height="9.700" fill="#fff"/><rect x="5.200" y="2.400" width="1.300" height="9.700" fill="#fff" opacity=".75"/><rect x="6.500" y="2.400" width="1.300" height="9.700" fill="#fff" opacity=".5"/><rect x="7.800" y="2.400" width="1.300" height="9.700" fill="#fff" opacity=".3"/><rect x="9.100" y="2.400" width="1.300" height="9.700" fill="#fff" opacity=".12"/></g></svg>
<div class="abs" style="left:118px;top:229px;width:1px;height:20px;background:#1f212a"></div>
<div class="btn" style="left:124px;top:225px;width:31px;height:27px;"></div>
<svg class="abs" style="left:131px;top:232px" width="17" height="11" viewBox="0 0 17 11"><g transform="translate(0.200,0.800) scale(1.00000,1.00000) translate(-0.000,-0.000)"><path d="M1.200 8.600L8 1.800l6.800 6.800" stroke="#fff" stroke-width="2" fill="none"/></g></svg>
<div class="btn" style="left:159px;top:225px;width:31px;height:27px;"></div>
<svg class="abs" style="left:166px;top:232px" width="17" height="11" viewBox="0 0 17 11"><g transform="translate(0.200,0.800) scale(1.00000,1.00000) translate(-0.000,-0.000)"><path d="M1.200 1.400L8 8.200l6.800-6.800" stroke="#fff" stroke-width="2" fill="none"/></g></svg>
<!--/D1-->
</div>
<div class="dock" id="d2" style="left:221px;width:219px"><div class="hd"><div class="t">来源</div></div>
<!--D2-->
<svg class="abs" style="left:199px;top:8px" width="17" height="16" viewBox="0 0 17 16"><rect x=".6" y=".6" width="10.300" height="8.300" rx="1" fill="#3c404b" stroke="#ececec" stroke-width="1.100"/><rect x=".6" y=".6" width="10.300" height="2.300" fill="#ececec"/><rect x="5.600" y="6.600" width="10.300" height="8.600" rx="1" fill="#3c404b" stroke="#ececec" stroke-width="1.100"/><rect x="5.600" y="6.600" width="10.300" height="2.300" fill="#ececec"/></svg>
<div class="sel" style="left:4px;top:35px;width:211px;height:30px"></div>
<svg class="abs" style="left:13px;top:43px" width="16" height="15" viewBox="0 0 16 15"><rect x="1" y="1" width="14" height="10.500" rx="2" fill="none" stroke="#fff" stroke-width="2"/><rect x="4.500" y="13.500" width="7" height="1" rx=".5" fill="#fff" opacity=".85"/></svg>
<div class="t" style="left:37.5px;top:42px;">显示器采集</div>
<svg class="abs" style="left:159px;top:44px" width="17" height="14" viewBox="0 0 17 14"><g transform="translate(0.000,0.300) scale(1.00000,1.00000) translate(-0.000,-0.000)"><path d="M.4 6.400C1.300 3 4.500 .2 8.400 .2s7.100 2.800 8 6.200c-.9 3.400-4.100 6.200-8 6.200S1.300 9.800 .4 6.400z" fill="#fff"/><circle cx="8.300" cy="6.400" r="4.500" fill="#284cb8"/><circle cx="8.300" cy="6.400" r="2.300" fill="#fff"/></g></svg>
<svg class="abs" style="left:188px;top:41px" width="15" height="18" viewBox="0 0 15 18"><path d="M3.900 6.600V4.800a3.200 3.200 0 0 1 6.400 0V9.500" fill="none" stroke="#a39f94" stroke-width="1.700"/><rect x="1" y="9.300" width="12.300" height="7.600" rx=".8" fill="#a39f94"/></svg>
<div class="btn" style="left:7px;top:225px;width:31px;height:27px;"></div>
<svg class="abs" style="left:14px;top:231px" width="15" height="15" viewBox="0 0 15 15"><g transform="translate(0.900,0.200) scale(1.00000,1.00000) translate(-0.000,-0.000)"><path d="M7 0v14M0 7h14" stroke="#fff" stroke-width="2" fill="none"/></g></svg>
<div class="btn" style="left:42px;top:225px;width:31px;height:27px;"></div>
<svg class="abs" style="left:49px;top:228px" width="17" height="18" viewBox="0 0 17 18"><g transform="translate(0.500,0.800) scale(1.00000,1.00000) translate(-0.000,-0.000)"><path d="M4.600 .9h6.800v1.300h-6.800z" fill="#fff"/><rect x=".4" y="1.700" width="15.200" height="2.200" rx=".6" fill="#fff"/><path d="M2.400 4.300v9.500q0 2.200 2.200 2.200h6.800q2.200 0 2.200-2.200v-9.500" fill="none" stroke="#fff" stroke-width="2.200"/><path d="M6 5.800v7.300M8 5.800v7.300M10 5.800v7.300" stroke="#fff" stroke-width="1"/></g></svg>
<div class="abs" style="left:77px;top:229px;width:1px;height:20px;background:#1f212a"></div>
<div class="btn" style="left:83px;top:225px;width:31px;height:27px;"></div>
<svg class="abs" style="left:90px;top:230px" width="17" height="17" viewBox="0 0 17 17"><g transform="translate(0.500,0.500) scale(0.80000,0.80000) translate(-2.000,-2.000)"><path d="M19.140 12.940c.04-.3.060-.61.060-.940s-.02-.64-.07-.940l2.030-1.580a.49.490 0 0 0 .12-.61l-1.920-3.320a.488.488 0 0 0-.59-.22l-2.390.960c-.5-.38-1.030-.7-1.620-.940l-.36-2.540a.484.484 0 0 0-.48-.41h-3.840c-.24 0-.43.170-.47.410l-.36 2.540c-.59.240-1.130.57-1.620.940l-2.390-.960c-.22-.08-.47 0-.59.220L2.740 8.870c-.12.210-.08.470.12.610l2.030 1.580c-.05.300-.09.630-.09.940s.02.640.07.940l-2.030 1.580a.49.490 0 0 0-.12.610l1.920 3.320c.12.220.37.290.59.220l2.390-.960c.5.380 1.030.7 1.620.940l.36 2.540c.05.240.24.410.48.410h3.840c.24 0 .44-.17.470-.41l.36-2.540c.59-.24 1.130-.56 1.620-.940l2.390.960c.22.080.47 0 .59-.22l1.920-3.320c.12-.22.070-.47-.12-.61l-2.010-1.580zM12 15.600c-1.980 0-3.600-1.620-3.600-3.600s1.620-3.600 3.600-3.600 3.600 1.620 3.600 3.600-1.620 3.600-3.600 3.600z" fill="#fff"/></g></svg>
<div class="abs" style="left:118px;top:229px;width:1px;height:20px;background:#1f212a"></div>
<div class="btn" style="left:124px;top:225px;width:31px;height:27px;"></div>
<svg class="abs" style="left:131px;top:232px" width="17" height="11" viewBox="0 0 17 11"><g transform="translate(0.200,0.800) scale(1.00000,1.00000) translate(-0.000,-0.000)"><path d="M1.200 8.600L8 1.800l6.800 6.800" stroke="#fff" stroke-width="2" fill="none"/></g></svg>
<div class="btn" style="left:159px;top:225px;width:31px;height:27px;"></div>
<svg class="abs" style="left:166px;top:232px" width="17" height="11" viewBox="0 0 17 11"><g transform="translate(0.200,0.800) scale(1.00000,1.00000) translate(-0.000,-0.000)"><path d="M1.200 1.400L8 8.200l6.800-6.800" stroke="#fff" stroke-width="2" fill="none"/></g></svg>
<!--/D2-->
</div>
<div class="dock" id="d3" style="left:444px;width:285px"><div class="hd"><div class="t">混音器</div></div>
<!--D3-->
<svg class="abs" style="left:265px;top:8px" width="17" height="16" viewBox="0 0 17 16"><rect x=".6" y=".6" width="10.300" height="8.300" rx="1" fill="#3c404b" stroke="#ececec" stroke-width="1.100"/><rect x=".6" y=".6" width="10.300" height="2.300" fill="#ececec"/><rect x="5.600" y="6.600" width="10.300" height="8.600" rx="1" fill="#3c404b" stroke="#ececec" stroke-width="1.100"/><rect x="5.600" y="6.600" width="10.300" height="2.300" fill="#ececec"/></svg>
<div class="t" style="left:6.5px;top:38.8px;">麦克风/Aux</div>
<div class="t" style="right:7.500px;top:38.8px">0.0 dB</div>
<div class="abs" style="left:6px;top:57px;width:3px;height:3px;background:#4c7f1f"></div>
<div class="abs" style="left:11px;top:57px;width:179px;height:3px;background:#5a5a5a"></div>
<div class="abs" style="left:190px;top:57px;width:49px;height:3px;background:#818181"></div>
<div class="abs" style="left:239px;top:57px;width:40px;height:3px;background:#3f3f3f"></div>
<div class="abs" style="left:6px;top:61px;width:3px;height:3px;background:#4c7f1f"></div>
<div class="abs" style="left:11px;top:61px;width:179px;height:3px;background:#5a5a5a"></div>
<div class="abs" style="left:190px;top:61px;width:49px;height:3px;background:#818181"></div>
<div class="abs" style="left:239px;top:61px;width:40px;height:3px;background:#3f3f3f"></div>
<svg class="abs" style="left:0;top:64px" width="285" height="3" viewBox="0 0 285 3"><rect x="11.90" y="0" width="1.200" height="3" fill="#e8e8e8"/><rect x="16.53" y="0" width=".8" height="1.500" fill="#8a8a8a"/><rect x="20.96" y="0" width=".8" height="1.500" fill="#8a8a8a"/><rect x="25.39" y="0" width=".8" height="1.500" fill="#8a8a8a"/><rect x="29.82" y="0" width=".8" height="1.500" fill="#8a8a8a"/><rect x="34.05" y="0" width="1.200" height="3" fill="#e8e8e8"/><rect x="38.68" y="0" width=".8" height="1.500" fill="#8a8a8a"/><rect x="43.11" y="0" width=".8" height="1.500" fill="#8a8a8a"/><rect x="47.54" y="0" width=".8" height="1.500" fill="#8a8a8a"/><rect x="51.97" y="0" width=".8" height="1.500" fill="#8a8a8a"/><rect x="56.20" y="0" width="1.200" height="3" fill="#e8e8e8"/><rect x="60.83" y="0" width=".8" height="1.500" fill="#8a8a8a"/><rect x="65.26" y="0" width=".8" height="1.500" fill="#8a8a8a"/><rect x="69.69" y="0" width=".8" height="1.500" fill="#8a8a8a"/><rect x="74.12" y="0" width=".8" height="1.500" fill="#8a8a8a"/><rect x="78.35" y="0" width="1.200" height="3" fill="#e8e8e8"/><rect x="82.98" y="0" width=".8" height="1.500" fill="#8a8a8a"/><rect x="87.41" y="0" width=".8" height="1.500" fill="#8a8a8a"/><rect x="91.84" y="0" width=".8" height="1.500" fill="#8a8a8a"/><rect x="96.27" y="0" width=".8" height="1.500" fill="#8a8a8a"/><rect x="100.50" y="0" width="1.200" height="3" fill="#e8e8e8"/><rect x="105.13" y="0" width=".8" height="1.500" fill="#8a8a8a"/><rect x="109.56" y="0" width=".8" height="1.500" fill="#8a8a8a"/><rect x="113.99" y="0" width=".8" height="1.500" fill="#8a8a8a"/><rect x="118.42" y="0" width=".8" height="1.500" fill="#8a8a8a"/><rect x="122.65" y="0" width="1.200" height="3" fill="#e8e8e8"/><rect x="127.28" y="0" width=".8" height="1.500" fill="#8a8a8a"/><rect x="131.71" y="0" width=".8" height="1.500" fill="#8a8a8a"/><rect x="136.14" y="0" width=".8" height="1.500" fill="#8a8a8a"/><rect x="140.57" y="0" width=".8" height="1.500" fill="#8a8a8a"/><rect x="144.80" y="0" width="1.200" height="3" fill="#e8e8e8"/><rect x="149.43" y="0" width=".8" height="1.500" fill="#8a8a8a"/><rect x="153.86" y="0" width=".8" height="1.500" fill="#8a8a8a"/><rect x="158.29" y="0" width=".8" height="1.500" fill="#8a8a8a"/><rect x="162.72" y="0" width=".8" height="1.500" fill="#8a8a8a"/><rect x="166.95" y="0" width="1.200" height="3" fill="#e8e8e8"/><rect x="171.58" y="0" width=".8" height="1.500" fill="#8a8a8a"/><rect x="176.01" y="0" width=".8" height="1.500" fill="#8a8a8a"/><rect x="180.44" y="0" width=".8" height="1.500" fill="#8a8a8a"/><rect x="184.87" y="0" width=".8" height="1.500" fill="#8a8a8a"/><rect x="189.10" y="0" width="1.200" height="3" fill="#e8e8e8"/><rect x="193.73" y="0" width=".8" height="1.500" fill="#8a8a8a"/><rect x="198.16" y="0" width=".8" height="1.500" fill="#8a8a8a"/><rect x="202.59" y="0" width=".8" height="1.500" fill="#8a8a8a"/><rect x="207.02" y="0" width=".8" height="1.500" fill="#8a8a8a"/><rect x="211.25" y="0" width="1.200" height="3" fill="#e8e8e8"/><rect x="215.88" y="0" width=".8" height="1.500" fill="#8a8a8a"/><rect x="220.31" y="0" width=".8" height="1.500" fill="#8a8a8a"/><rect x="224.74" y="0" width=".8" height="1.500" fill="#8a8a8a"/><rect x="229.17" y="0" width=".8" height="1.500" fill="#8a8a8a"/><rect x="233.40" y="0" width="1.200" height="3" fill="#e8e8e8"/><rect x="238.03" y="0" width=".8" height="1.500" fill="#8a8a8a"/><rect x="242.46" y="0" width=".8" height="1.500" fill="#8a8a8a"/><rect x="246.89" y="0" width=".8" height="1.500" fill="#8a8a8a"/><rect x="251.32" y="0" width=".8" height="1.500" fill="#8a8a8a"/><rect x="255.55" y="0" width="1.200" height="3" fill="#e8e8e8"/><rect x="260.18" y="0" width=".8" height="1.500" fill="#8a8a8a"/><rect x="264.61" y="0" width=".8" height="1.500" fill="#8a8a8a"/><rect x="269.04" y="0" width=".8" height="1.500" fill="#8a8a8a"/><rect x="273.47" y="0" width=".8" height="1.500" fill="#8a8a8a"/><rect x="277.70" y="0" width="1.200" height="3" fill="#e8e8e8"/></svg>
<div class="tk" style="left:2.5px;top:65.5px;width:20px;text-align:center">-60</div>
<div class="tk" style="left:24.6px;top:65.5px;width:20px;text-align:center">-55</div>
<div class="tk" style="left:46.8px;top:65.5px;width:20px;text-align:center">-50</div>
<div class="tk" style="left:68.9px;top:65.5px;width:20px;text-align:center">-45</div>
<div class="tk" style="left:91.1px;top:65.5px;width:20px;text-align:center">-40</div>
<div class="tk" style="left:113.2px;top:65.5px;width:20px;text-align:center">-35</div>
<div class="tk" style="left:135.4px;top:65.5px;width:20px;text-align:center">-30</div>
<div class="tk" style="left:157.5px;top:65.5px;width:20px;text-align:center">-25</div>
<div class="tk" style="left:179.7px;top:65.5px;width:20px;text-align:center">-20</div>
<div class="tk" style="left:201.8px;top:65.5px;width:20px;text-align:center">-15</div>
<div class="tk" style="left:224.0px;top:65.5px;width:20px;text-align:center">-10</div>
<div class="tk" style="left:246.1px;top:65.5px;width:20px;text-align:center">-5</div>
<div class="tk" style="left:270.3px;top:65.5px;width:8.800px;text-align:right">0</div>
<div class="abs" style="left:6px;top:88px;width:204px;height:4px;border-radius:2px;background:#5b5f6c"></div>
<div class="abs" style="left:6px;top:88px;width:192px;height:4px;border-radius:2px;background:#2a82da"></div>
<div class="abs" style="left:191.5px;top:85.7px;width:18.600px;height:8.600px;border-radius:4.300px;background:#fff;box-shadow:0 0 0 1px #23252e"></div>
<svg class="abs" style="left:216px;top:83px" width="16" height="14" viewBox="0 0 16 14"><path d="M0 4.600h2.600L7.200 .2v13.600L2.600 9.400H0z" fill="#c01c2c"/><path d="M9.800 4.800l4.400 4.400M14.200 4.800l-4.400 4.400" stroke="#c01c2c" stroke-width="2"/></svg>
<div class="btn" style="left:245px;top:77px;width:32px;height:26px;"></div>
<svg class="abs" style="left:258px;top:81px" width="6" height="18" viewBox="0 0 6 18"><circle cx="3" cy="3" r="2.100" fill="#fff"/><circle cx="3" cy="9" r="2.100" fill="#fff"/><circle cx="3" cy="15" r="2.100" fill="#fff"/></svg>
<div class="t" style="left:6.5px;top:113.8px;">桌面音频</div>
<div class="t" style="right:7.500px;top:113.8px">-0.4 dB</div>
<div class="abs" style="left:6px;top:132px;width:3px;height:3px;background:#4c7f1f"></div>
<div class="abs" style="left:11px;top:132px;width:179px;height:3px;background:#5a5a5a"></div>
<div class="abs" style="left:190px;top:132px;width:49px;height:3px;background:#818181"></div>
<div class="abs" style="left:239px;top:132px;width:40px;height:3px;background:#3f3f3f"></div>
<div class="abs" style="left:6px;top:136px;width:3px;height:3px;background:#4c7f1f"></div>
<div class="abs" style="left:11px;top:136px;width:179px;height:3px;background:#5a5a5a"></div>
<div class="abs" style="left:190px;top:136px;width:49px;height:3px;background:#818181"></div>
<div class="abs" style="left:239px;top:136px;width:40px;height:3px;background:#3f3f3f"></div>
<svg class="abs" style="left:0;top:139px" width="285" height="3" viewBox="0 0 285 3"><rect x="11.90" y="0" width="1.200" height="3" fill="#e8e8e8"/><rect x="16.53" y="0" width=".8" height="1.500" fill="#8a8a8a"/><rect x="20.96" y="0" width=".8" height="1.500" fill="#8a8a8a"/><rect x="25.39" y="0" width=".8" height="1.500" fill="#8a8a8a"/><rect x="29.82" y="0" width=".8" height="1.500" fill="#8a8a8a"/><rect x="34.05" y="0" width="1.200" height="3" fill="#e8e8e8"/><rect x="38.68" y="0" width=".8" height="1.500" fill="#8a8a8a"/><rect x="43.11" y="0" width=".8" height="1.500" fill="#8a8a8a"/><rect x="47.54" y="0" width=".8" height="1.500" fill="#8a8a8a"/><rect x="51.97" y="0" width=".8" height="1.500" fill="#8a8a8a"/><rect x="56.20" y="0" width="1.200" height="3" fill="#e8e8e8"/><rect x="60.83" y="0" width=".8" height="1.500" fill="#8a8a8a"/><rect x="65.26" y="0" width=".8" height="1.500" fill="#8a8a8a"/><rect x="69.69" y="0" width=".8" height="1.500" fill="#8a8a8a"/><rect x="74.12" y="0" width=".8" height="1.500" fill="#8a8a8a"/><rect x="78.35" y="0" width="1.200" height="3" fill="#e8e8e8"/><rect x="82.98" y="0" width=".8" height="1.500" fill="#8a8a8a"/><rect x="87.41" y="0" width=".8" height="1.500" fill="#8a8a8a"/><rect x="91.84" y="0" width=".8" height="1.500" fill="#8a8a8a"/><rect x="96.27" y="0" width=".8" height="1.500" fill="#8a8a8a"/><rect x="100.50" y="0" width="1.200" height="3" fill="#e8e8e8"/><rect x="105.13" y="0" width=".8" height="1.500" fill="#8a8a8a"/><rect x="109.56" y="0" width=".8" height="1.500" fill="#8a8a8a"/><rect x="113.99" y="0" width=".8" height="1.500" fill="#8a8a8a"/><rect x="118.42" y="0" width=".8" height="1.500" fill="#8a8a8a"/><rect x="122.65" y="0" width="1.200" height="3" fill="#e8e8e8"/><rect x="127.28" y="0" width=".8" height="1.500" fill="#8a8a8a"/><rect x="131.71" y="0" width=".8" height="1.500" fill="#8a8a8a"/><rect x="136.14" y="0" width=".8" height="1.500" fill="#8a8a8a"/><rect x="140.57" y="0" width=".8" height="1.500" fill="#8a8a8a"/><rect x="144.80" y="0" width="1.200" height="3" fill="#e8e8e8"/><rect x="149.43" y="0" width=".8" height="1.500" fill="#8a8a8a"/><rect x="153.86" y="0" width=".8" height="1.500" fill="#8a8a8a"/><rect x="158.29" y="0" width=".8" height="1.500" fill="#8a8a8a"/><rect x="162.72" y="0" width=".8" height="1.500" fill="#8a8a8a"/><rect x="166.95" y="0" width="1.200" height="3" fill="#e8e8e8"/><rect x="171.58" y="0" width=".8" height="1.500" fill="#8a8a8a"/><rect x="176.01" y="0" width=".8" height="1.500" fill="#8a8a8a"/><rect x="180.44" y="0" width=".8" height="1.500" fill="#8a8a8a"/><rect x="184.87" y="0" width=".8" height="1.500" fill="#8a8a8a"/><rect x="189.10" y="0" width="1.200" height="3" fill="#e8e8e8"/><rect x="193.73" y="0" width=".8" height="1.500" fill="#8a8a8a"/><rect x="198.16" y="0" width=".8" height="1.500" fill="#8a8a8a"/><rect x="202.59" y="0" width=".8" height="1.500" fill="#8a8a8a"/><rect x="207.02" y="0" width=".8" height="1.500" fill="#8a8a8a"/><rect x="211.25" y="0" width="1.200" height="3" fill="#e8e8e8"/><rect x="215.88" y="0" width=".8" height="1.500" fill="#8a8a8a"/><rect x="220.31" y="0" width=".8" height="1.500" fill="#8a8a8a"/><rect x="224.74" y="0" width=".8" height="1.500" fill="#8a8a8a"/><rect x="229.17" y="0" width=".8" height="1.500" fill="#8a8a8a"/><rect x="233.40" y="0" width="1.200" height="3" fill="#e8e8e8"/><rect x="238.03" y="0" width=".8" height="1.500" fill="#8a8a8a"/><rect x="242.46" y="0" width=".8" height="1.500" fill="#8a8a8a"/><rect x="246.89" y="0" width=".8" height="1.500" fill="#8a8a8a"/><rect x="251.32" y="0" width=".8" height="1.500" fill="#8a8a8a"/><rect x="255.55" y="0" width="1.200" height="3" fill="#e8e8e8"/><rect x="260.18" y="0" width=".8" height="1.500" fill="#8a8a8a"/><rect x="264.61" y="0" width=".8" height="1.500" fill="#8a8a8a"/><rect x="269.04" y="0" width=".8" height="1.500" fill="#8a8a8a"/><rect x="273.47" y="0" width=".8" height="1.500" fill="#8a8a8a"/><rect x="277.70" y="0" width="1.200" height="3" fill="#e8e8e8"/></svg>
<div class="tk" style="left:2.5px;top:140.5px;width:20px;text-align:center">-60</div>
<div class="tk" style="left:24.6px;top:140.5px;width:20px;text-align:center">-55</div>
<div class="tk" style="left:46.8px;top:140.5px;width:20px;text-align:center">-50</div>
<div class="tk" style="left:68.9px;top:140.5px;width:20px;text-align:center">-45</div>
<div class="tk" style="left:91.1px;top:140.5px;width:20px;text-align:center">-40</div>
<div class="tk" style="left:113.2px;top:140.5px;width:20px;text-align:center">-35</div>
<div class="tk" style="left:135.4px;top:140.5px;width:20px;text-align:center">-30</div>
<div class="tk" style="left:157.5px;top:140.5px;width:20px;text-align:center">-25</div>
<div class="tk" style="left:179.7px;top:140.5px;width:20px;text-align:center">-20</div>
<div class="tk" style="left:201.8px;top:140.5px;width:20px;text-align:center">-15</div>
<div class="tk" style="left:224.0px;top:140.5px;width:20px;text-align:center">-10</div>
<div class="tk" style="left:246.1px;top:140.5px;width:20px;text-align:center">-5</div>
<div class="tk" style="left:270.3px;top:140.5px;width:8.800px;text-align:right">0</div>
<div class="abs" style="left:6px;top:163px;width:204px;height:4px;border-radius:2px;background:#5b5f6c"></div>
<div class="abs" style="left:6px;top:163px;width:188px;height:4px;border-radius:2px;background:#2a82da"></div>
<div class="abs" style="left:187.5px;top:160.7px;width:18.600px;height:8.600px;border-radius:4.300px;background:#fff;box-shadow:0 0 0 1px #23252e"></div>
<svg class="abs" style="left:216px;top:158px" width="16" height="14" viewBox="0 0 16 14"><path d="M0 4.600h2.600L7.200 .2v13.600L2.600 9.400H0z" fill="#c01c2c"/><path d="M9.800 4.800l4.400 4.400M14.200 4.800l-4.400 4.400" stroke="#c01c2c" stroke-width="2"/></svg>
<div class="btn" style="left:245px;top:152px;width:32px;height:26px;"></div>
<svg class="abs" style="left:258px;top:156px" width="6" height="18" viewBox="0 0 6 18"><circle cx="3" cy="3" r="2.100" fill="#fff"/><circle cx="3" cy="9" r="2.100" fill="#fff"/><circle cx="3" cy="15" r="2.100" fill="#fff"/></svg>
<div class="btn" style="left:7px;top:225px;width:31px;height:27px;"></div>
<svg class="abs" style="left:14px;top:229px" width="17" height="17" viewBox="0 0 17 17"><g transform="translate(0.000,0.600) scale(1.00000,1.00000) translate(-0.000,-0.000)"><g transform="translate(-1.500,3.500) scale(.56)"><path d="M19.140 12.940c.04-.3.060-.61.060-.940s-.02-.64-.07-.940l2.030-1.580a.49.490 0 0 0 .12-.61l-1.920-3.320a.488.488 0 0 0-.59-.22l-2.390.960c-.5-.38-1.030-.7-1.620-.940l-.36-2.540a.484.484 0 0 0-.48-.41h-3.840c-.24 0-.43.170-.47.410l-.36 2.540c-.59.240-1.130.57-1.620.940l-2.390-.960c-.22-.08-.47 0-.59.220L2.740 8.870c-.12.210-.08.470.12.610l2.030 1.580c-.05.300-.09.630-.09.940s.02.640.07.940l-2.030 1.580a.49.490 0 0 0-.12.610l1.920 3.320c.12.220.37.290.59.220l2.390-.960c.5.380 1.030.7 1.620.940l.36 2.540c.05.240.24.410.48.410h3.840c.24 0 .44-.17.470-.41l.36-2.540c.59-.24 1.130-.56 1.620-.940l2.390.960c.22.080.47 0 .59-.22l1.920-3.320c.12-.22.070-.47-.12-.61l-2.010-1.580zM12 15.600c-1.980 0-3.600-1.620-3.600-3.600s1.620-3.600 3.600-3.600 3.600 1.620 3.600 3.600-1.620 3.600-3.600 3.600z" fill="#fff"/></g><g transform="translate(8,-.8) scale(.36)"><path d="M19.140 12.940c.04-.3.060-.61.060-.940s-.02-.64-.07-.940l2.030-1.580a.49.490 0 0 0 .12-.61l-1.920-3.320a.488.488 0 0 0-.59-.22l-2.390.960c-.5-.38-1.030-.7-1.620-.940l-.36-2.540a.484.484 0 0 0-.48-.41h-3.840c-.24 0-.43.170-.47.410l-.36 2.540c-.59.240-1.130.57-1.620.940l-2.390-.960c-.22-.08-.47 0-.59.220L2.740 8.870c-.12.210-.08.470.12.610l2.030 1.580c-.05.300-.09.630-.09.940s.02.640.07.940l-2.030 1.580a.49.490 0 0 0-.12.610l1.920 3.320c.12.220.37.290.59.220l2.390-.960c.5.380 1.030.7 1.620.940l.36 2.540c.05.240.24.410.48.410h3.840c.24 0 .44-.17.470-.41l.36-2.540c.59-.24 1.130-.56 1.620-.940l2.390.960c.22.080.47 0 .59-.22l1.920-3.320c.12-.22.070-.47-.12-.61l-2.010-1.580zM12 15.600c-1.980 0-3.600-1.620-3.600-3.600s1.620-3.600 3.600-3.600 3.600 1.620 3.600 3.600-1.620 3.600-3.600 3.600z" fill="#fff"/></g></g></svg>
<div class="abs" style="left:42px;top:229px;width:1px;height:20px;background:#1f212a"></div>
<div class="btn" style="left:48px;top:225px;width:31px;height:27px;"></div>
<svg class="abs" style="left:59px;top:228px" width="7" height="19" viewBox="0 0 7 19"><g transform="translate(0.500,0.500) scale(1.00000,1.00000) translate(-0.000,-0.000)"><circle cx="3" cy="3" r="2.100" fill="#fff"/><circle cx="3" cy="9" r="2.100" fill="#fff"/><circle cx="3" cy="15" r="2.100" fill="#fff"/></g></svg>
<!--/D3-->
</div>
<div class="dock" id="d4" style="left:733px;width:132px"><div class="hd"><div class="t">转场动画</div></div>
<!--D4-->
<svg class="abs" style="left:112px;top:8px" width="17" height="16" viewBox="0 0 17 16"><rect x=".6" y=".6" width="10.300" height="8.300" rx="1" fill="#3c404b" stroke="#ececec" stroke-width="1.100"/><rect x=".6" y=".6" width="10.300" height="2.300" fill="#ececec"/><rect x="5.600" y="6.600" width="10.300" height="8.600" rx="1" fill="#3c404b" stroke="#ececec" stroke-width="1.100"/><rect x="5.600" y="6.600" width="10.300" height="2.300" fill="#ececec"/></svg>
<div class="btn" style="left:7px;top:37px;width:118px;height:28px;"></div>
<div class="abs" style="left:104px;top:37px;width:1px;height:28px;background:#23252e"></div>
<div class="t" style="left:17.5px;top:43px;">淡入淡出</div>
<svg class="abs" style="left:111px;top:45px" width="8" height="5" viewBox="0 0 8 5"><g transform="translate(0.500,0.500) scale(1.00000,1.00000) translate(-0.000,-0.000)"><path d="M.5 3.5L3.5 .5L6.5 3.5" stroke="#e4e4e8" stroke-width="1.2" fill="none"/></g></svg>
<svg class="abs" style="left:111px;top:53px" width="8" height="5" viewBox="0 0 8 5"><g transform="translate(0.500,0.500) scale(1.00000,1.00000) translate(-0.000,-0.000)"><path d="M.5 .5L3.5 3.5L6.5 .5" stroke="#e4e4e8" stroke-width="1.2" fill="none"/></g></svg>
<div class="t" style="left:5.5px;top:79px;">时长</div>
<div class="btn" style="left:35px;top:71px;width:89px;height:31px;"></div>
<div class="t" style="left:44px;top:79px;">300 ms</div>
<svg class="abs" style="left:108px;top:77px" width="10" height="6" viewBox="0 0 10 6"><g transform="translate(0.800,0.700) scale(1.00000,1.00000) translate(-0.000,-0.000)"><path d="M.5 4.3L4.2 .5L7.9 4.3" stroke="#fff" stroke-width="1.3" fill="none"/></g></svg>
<svg class="abs" style="left:108px;top:91px" width="10" height="6" viewBox="0 0 10 6"><g transform="translate(0.800,0.200) scale(1.00000,1.00000) translate(-0.000,-0.000)"><path d="M.5 .5L4.2 4.3L7.9 .5" stroke="#fff" stroke-width="1.3" fill="none"/></g></svg>
<div class="btn" style="left:13px;top:107px;width:32px;height:26px;"></div>
<svg class="abs" style="left:22px;top:113px" width="14" height="14" viewBox="0 0 14 14"><path d="M7 0v14M0 7h14" stroke="#fff" stroke-width="2" fill="none"/></svg>
<div class="btn" style="left:53px;top:107px;width:32px;height:26px;background:#191b23"></div>
<svg class="abs" style="left:61px;top:111px" width="17" height="18" viewBox="0 0 17 18"><g transform="translate(0.500,0.300) scale(1.00000,1.00000) translate(-0.000,-0.000)"><path d="M4.600 .9h6.800v1.300h-6.800z" fill="#fff"/><rect x=".4" y="1.700" width="15.200" height="2.200" rx=".6" fill="#fff"/><path d="M2.400 4.300v9.500q0 2.200 2.200 2.200h6.800q2.200 0 2.200-2.200v-9.500" fill="none" stroke="#fff" stroke-width="2.200"/><path d="M6 5.800v7.300M8 5.800v7.300M10 5.800v7.300" stroke="#fff" stroke-width="1"/></g></svg>
<div class="btn" style="left:93px;top:107px;width:32px;height:26px;background:#191b23"></div>
<svg class="abs" style="left:106px;top:111px" width="6" height="18" viewBox="0 0 6 18"><circle cx="3" cy="3" r="2.100" fill="#fff"/><circle cx="3" cy="9" r="2.100" fill="#fff"/><circle cx="3" cy="15" r="2.100" fill="#fff"/></svg>
<!--/D4-->
</div>
<div class="dock" id="d5" style="left:869px;width:204px"><div class="hd"><div class="t">控制按钮</div></div>
<!--D5-->
<svg class="abs" style="left:184px;top:8px" width="17" height="16" viewBox="0 0 17 16"><rect x=".6" y=".6" width="10.300" height="8.300" rx="1" fill="#3c404b" stroke="#ececec" stroke-width="1.100"/><rect x=".6" y=".6" width="10.300" height="2.300" fill="#ececec"/><rect x="5.600" y="6.600" width="10.300" height="8.600" rx="1" fill="#3c404b" stroke="#ececec" stroke-width="1.100"/><rect x="5.600" y="6.600" width="10.300" height="2.300" fill="#ececec"/></svg>
<div class="btn" style="left:5px;top:36px;width:194px;height:38px;"></div><div class="t" style="left:5px;width:194px;text-align:center;top:47.5px">开始直播</div>
<div class="btn" style="left:5px;top:78px;width:194px;height:38px;"></div><div class="t" style="left:5px;width:194px;text-align:center;top:89.5px">开始录制</div>
<div class="btn" style="left:5px;top:120px;width:160px;height:30px;"></div><div class="t" style="left:5px;width:160px;text-align:center;top:127.5px">启动虚拟摄像机</div>
<div class="btn" style="left:169px;top:120px;width:30px;height:30px;"></div>
<svg class="abs" style="left:176px;top:127px" width="16" height="16" viewBox="2 2 20 20"><path d="M19.140 12.940c.04-.3.060-.61.060-.940s-.02-.64-.07-.940l2.030-1.580a.49.490 0 0 0 .12-.61l-1.920-3.320a.488.488 0 0 0-.59-.22l-2.390.960c-.5-.38-1.030-.7-1.620-.940l-.36-2.540a.484.484 0 0 0-.48-.41h-3.840c-.24 0-.43.170-.47.410l-.36 2.540c-.59.240-1.130.57-1.620.940l-2.390-.960c-.22-.08-.47 0-.59.220L2.740 8.870c-.12.210-.08.470.12.610l2.030 1.580c-.05.300-.09.630-.09.940s.02.640.07.940l-2.030 1.580a.49.490 0 0 0-.12.610l1.920 3.320c.12.220.37.290.59.220l2.390-.960c.5.380 1.030.7 1.620.940l.36 2.540c.05.240.24.410.48.410h3.840c.24 0 .44-.17.470-.41l.36-2.540c.59-.24 1.130-.56 1.620-.940l2.390.960c.22.080.47 0 .59-.22l1.920-3.320c.12-.22.070-.47-.12-.61l-2.010-1.580zM12 15.600c-1.980 0-3.600-1.620-3.600-3.600s1.620-3.600 3.600-3.600 3.600 1.620 3.600 3.600-1.620 3.600-3.600 3.600z" fill="#fff"/></svg>
<div class="btn" style="left:5px;top:154px;width:194px;height:30px;"></div><div class="t" style="left:5px;width:194px;text-align:center;top:161.5px">工作室模式</div>
<div class="btn" style="left:5px;top:188px;width:194px;height:30px;"></div><div class="t" style="left:5px;width:194px;text-align:center;top:195.5px">设置</div>
<div class="btn" style="left:5px;top:222px;width:194px;height:30px;"></div><div class="t" style="left:5px;width:194px;text-align:center;top:229.5px">退出</div>
<!--/D5-->
</div>

<!-- STATUS BAR -->
<div id="sbline" class="abs"></div>
<!--STATUS-->
<div class="abs" style="left:0;top:756px;width:1073px;height:23px;background:#2b2e38"></div>
<div class="abs" style="left:0;top:755px;width:1073px;height:1px;background:#3a3e4a"></div>
<div class="abs" style="left:593px;top:757px;width:1px;height:22px;background:#3a3e4a"></div>
<div class="abs" style="left:634px;top:757px;width:1px;height:22px;background:#3a3e4a"></div>
<div class="abs" style="left:733px;top:757px;width:1px;height:22px;background:#3a3e4a"></div>
<div class="abs" style="left:833px;top:757px;width:1px;height:22px;background:#3a3e4a"></div>
<div class="abs" style="left:919px;top:757px;width:1px;height:22px;background:#3a3e4a"></div>
<svg class="abs" style="left:605px;top:763px" width="17" height="16" viewBox="0 0 17 16"><rect x=".5" y="10" width="3.200" height="5" rx=".6" fill="#4d5160"/><rect x="4.800" y="7" width="3.200" height="8" rx=".6" fill="#4d5160"/><rect x="9.100" y="4" width="3.200" height="11" rx=".6" fill="#4d5160"/><rect x="13.400" y="1" width="3.200" height="14" rx=".6" fill="#4d5160"/></svg>
<svg class="abs" style="left:646px;top:763px" width="17" height="16" viewBox="0 0 17 16"><circle cx="8.800" cy="8" r="2.500" fill="#8d9099"/><path d="M5.800 4.200a5 5 0 0 0 0 7.600M11.800 4.200a5 5 0 0 1 0 7.600" stroke="#6a6d78" stroke-width="1.200" fill="none"/><path d="M3.700 2.400a7.600 7.600 0 0 0 0 11.200M13.900 2.400a7.600 7.600 0 0 1 0 11.200" stroke="#4b4f5d" stroke-width="1.200" fill="none"/></svg>
<div class="t" style="left:669.5px;top:763.5px;color:#9b9da5">00:00:00</div>
<div class="abs" style="left:747px;top:764px;width:14px;height:14px;border-radius:50%;background:#5c5f6c"></div>
<div class="t" style="left:768.5px;top:763.5px;color:#9b9da5">00:00:00</div>
<div class="t" style="left:845.5px;top:763.5px;letter-spacing:-.3px">CPU: 1.1%</div>
<div class="t" style="left:932.5px;top:763.5px;letter-spacing:-.15px">30.00 / 30.00 FPS</div>
<!--/STATUS-->
</body>
</html>
